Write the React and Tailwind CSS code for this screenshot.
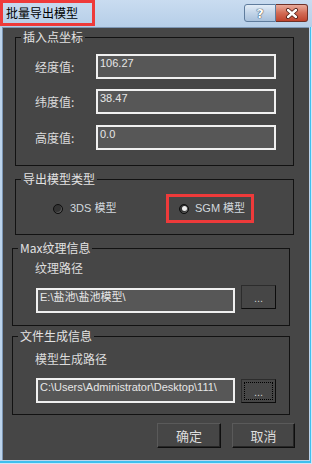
const cjk = "font-['Noto_Sans_CJK_SC','Liberation_Sans',sans-serif]"
const latin = "font-['Liberation_Sans','Noto_Sans_CJK_SC',sans-serif]"

function Field({ value, className = "" }) {
  return (
    <div
      className={`h-[25px] border-2 border-[#f0f0f0] bg-[#575757] px-[2px] text-[11px] leading-[15px] text-[#e6e6e6] whitespace-nowrap overflow-hidden ${latin} ${className}`}
    >
      {value}
    </div>
  )
}

function BrowseButton({ focused, className = "" }) {
  return (
    <div
      className={`relative flex h-[24px] w-[35px] items-center justify-center border border-t-[#2c2c2c] border-l-[#2c2c2c] border-r-[#0c0c0c] border-b-[#0c0c0c] bg-[#464646] text-[11px] text-[#cfcfcf] ${latin} ${className}`}
    >
      <span className="mt-[2px]">...</span>
      {focused && <div className="absolute inset-[2px] border border-dotted border-black" />}
    </div>
  )
}

function Radio({ checked }) {
  return (
    <div className="flex h-[10px] w-[10px] items-center justify-center rounded-full border border-[#0e0e0e] bg-[#333] shadow-[inset_-1px_-1px_0_#5a5a5a]">
      {checked && <div className="h-[5px] w-[5px] rounded-full bg-[#ececec]" />}
    </div>
  )
}

function Group({ title, className = "", children }) {
  return (
    <fieldset className={`border border-[#121212] ${className}`}>
      <legend className={`ml-[5px] px-[2px] text-[12px] leading-[16px] text-[#e2e2e2] ${cjk}`}>{title}</legend>
      {children}
    </fieldset>
  )
}

function CoordRow({ label, value, className = "" }) {
  return (
    <div className={`flex items-center pl-[19px] ${className}`}>
      <span className={`w-[61px] text-[12px] text-[#dcdcdc] ${cjk}`}>{label}</span>
      <Field value={value} className="w-[180px]" />
    </div>
  )
}

export default function App() {
  return (
    <div className="flex h-[464px] w-[312px] flex-col bg-[#bcd4ec] shadow-[inset_-1px_-1px_0_#d2e4f6,inset_-2px_-3px_0_#3ebfee]">
      {/* title bar */}
      <div className="flex h-[27px] items-start bg-gradient-to-b from-[#c9dcf0] to-[#b6cee8]">
        <div className={`h-[26px] w-[95px] border-[3px] border-[#ee3a3a] pl-[3px] text-[12px] leading-[19px] text-black ${cjk}`}>
          批量导出模型
        </div>
        <div className="ml-auto mr-[4px] mt-[4px] flex">
          <div className="flex h-[18px] w-[32px] items-center justify-center rounded-l-[3px] border border-[#5f7c9d] bg-gradient-to-b from-[#e3edf7] via-[#c2d4e8] to-[#a9c1dc]">
            <span className="text-[13px] font-bold leading-none text-white [text-shadow:0_0_1px_#1c2c40,0_0_1px_#1c2c40] font-['DejaVu_Sans',sans-serif]">?</span>
          </div>
          <div className="flex h-[18px] w-[32px] items-center justify-center rounded-r-[3px] border border-l-0 border-[#6e3128] bg-gradient-to-b from-[#e9ab9b] via-[#d26b55] to-[#c0432d]">
            <svg width="14" height="11" viewBox="0 0 14 11">
              <path d="M3 2 L11 9 M11 2 L3 9" stroke="#4a1a12" strokeWidth="4" strokeLinecap="round" />
              <path d="M3 2 L11 9 M11 2 L3 9" stroke="#ffffff" strokeWidth="2.4" strokeLinecap="round" />
            </svg>
          </div>
        </div>
      </div>

      {/* client */}
      <div className="flex flex-1">
        <div className="w-[2px]" />
        <div className="flex w-[307px] flex-col border-l border-t border-[#7c96b4] bg-[#464646]">
          <Group title="插入点坐标" className="ml-[12px] mt-[1px] w-[279px] pb-[15px]">
            <CoordRow label="经度值:" value="106.27" className="mt-[9px]" />
            <CoordRow label="纬度值:" value="38.47" className="mt-[10px]" />
            <CoordRow label="高度值:" value="0.0" className="mt-[11px]" />
          </Group>

          <Group title="导出模型类型" className="ml-[12px] mt-[5px] w-[279px] pb-[11px]">
            <div className="mt-[7px] flex h-[29px] items-center">
              <div className="flex w-[150px] items-center gap-[7px] pl-[37px]">
                <Radio />
                <span className={`text-[11px] text-[#d2d8de] ${latin}`}>3DS 模型</span>
              </div>
              <div className="flex h-[29px] w-[88px] items-center gap-[6px] border-[3px] border-[#ee3a3a] pl-[10px]">
                <Radio checked />
                <span className={`text-[11px] text-[#d2d8de] ${latin}`}>SGM 模型</span>
              </div>
            </div>
          </Group>

          <Group title="Max纹理信息" className="ml-[9px] mt-[5px] w-[278px] pb-[12px]">
            <div className={`mt-[4px] pl-[22px] text-[12px] leading-[16px] text-[#dcdcdc] ${cjk}`}>纹理路径</div>
            <div className="mt-[9px] flex items-start gap-[6px] pl-[23px]">
              <Field value="E:\盐池\盐池模型\" className="mt-[3px] w-[199px]" />
              <BrowseButton />
            </div>
          </Group>

          <Group title="文件生成信息" className="ml-[9px] mt-[2px] w-[278px] pb-[11px]">
            <div className={`mt-[7px] pl-[22px] text-[12px] leading-[16px] text-[#dcdcdc] ${cjk}`}>模型生成路径</div>
            <div className="mt-[11px] flex items-start gap-[6px] pl-[23px]">
              <Field value="C:\Users\Administrator\Desktop\111\" className="w-[199px]" />
              <BrowseButton focused className="mt-[1px]" />
            </div>
          </Group>

          <div className="mt-[8px] flex justify-end gap-[11px] pr-[14px]">
            <button className={`h-[25px] w-[64px] border border-t-[#5a5a5a] border-l-[#5a5a5a] border-r-[#0e0e0e] border-b-[#0e0e0e] bg-[#464646] text-[13px] text-[#dedede] shadow-[inset_-1px_-1px_0_#262626] ${cjk}`}>
              确定
            </button>
            <button className={`h-[25px] w-[63px] border border-t-[#5a5a5a] border-l-[#5a5a5a] border-r-[#0e0e0e] border-b-[#0e0e0e] bg-[#464646] text-[13px] text-[#dedede] shadow-[inset_-1px_-1px_0_#262626] ${cjk}`}>
              取消
            </button>
          </div>
        </div>
        <div className="w-[3px]" />
      </div>
      <div className="h-[4px]" />
    </div>
  )
}
